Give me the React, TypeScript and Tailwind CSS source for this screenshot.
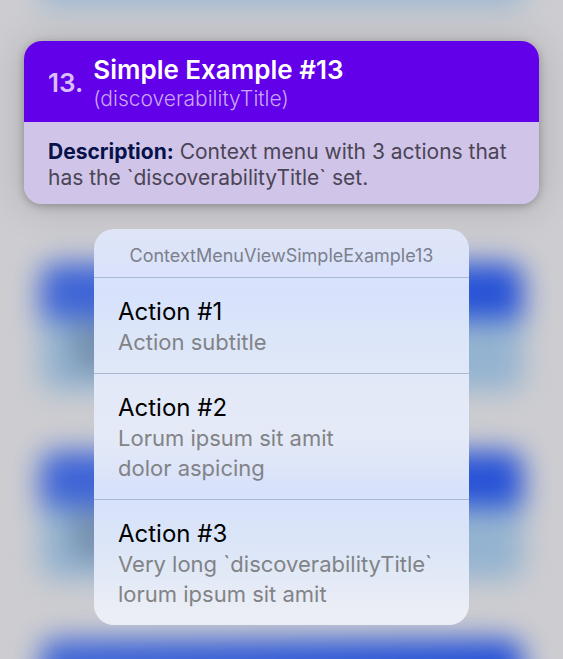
const actions = [
  { title: 'Action #1', lines: ['Action subtitle'] },
  { title: 'Action #2', lines: ['Lorum ipsum sit amit', 'dolor aspicing'] },
  { title: 'Action #3', lines: ['Very long `discoverabilityTitle`', 'lorum ipsum sit amit'] },
];

function BackdropCard() {
  return (
    <div className="shrink-0 overflow-hidden rounded-2xl">
      <div className="h-[56px] bg-linear-to-r from-[#4066d6] to-[#2450d6]" />
      <div className="h-[72px] bg-[#94b3d0] pt-1 pl-8">
        <div className="h-12 w-4/5 bg-[#7590ae]" />
      </div>
    </div>
  );
}

function Backdrop() {
  return (
    <div aria-hidden="true" className="absolute inset-0 overflow-hidden bg-[#cdcdd1]">
      <div className="-mt-10 px-10 blur-[14px]">
        <div className="h-11 bg-[#94b3d0]" />
        <div className="flex flex-col gap-[60px] pt-[259px]">
          <BackdropCard />
          <BackdropCard />
          <BackdropCard />
        </div>
      </div>
    </div>
  );
}

function ExampleCard() {
  return (
    <article className="overflow-hidden rounded-[18px] shadow-[0_2px_40px_rgba(0,0,0,0.16),0_2px_8px_rgba(0,0,0,0.25)]">
      <header className="flex items-center gap-2.5 bg-[#6200ea] px-6 pt-[13px] pb-2.5">
        <span className="text-[26px] leading-8 font-semibold text-[#d9bffa]">13.</span>
        <div>
          <h1 className="text-[26px] leading-8 font-semibold text-white">Simple Example #13</h1>
          <p className="text-[21px] leading-[26px] font-light text-[#c8a6f8]">(discoverabilityTitle)</p>
        </div>
      </header>
      <p className="bg-[#d1c4e9] px-6 pt-[17px] pb-[13px] text-[21px] leading-[26px] font-normal text-[#4a4555]">
        <strong className="font-bold text-[#06134a]">Description:</strong> Context menu with 3 actions that
        has the `discoverabilityTitle` set.
      </p>
    </article>
  );
}

function ContextMenu() {
  return (
    <section
      aria-labelledby="menu-title"
      className="mx-auto w-full max-w-[375px] overflow-hidden rounded-[20px] bg-linear-to-b from-[#dfe5f7] via-[#e3e9f7] via-42% to-[#ebeef5]"
    >
      <div className="bg-[linear-gradient(to_bottom,transparent_0%,#d7e1fc_16%,#dbe6f9_27%,transparent_40%,transparent_52%,#d7e1fb_66%,#dae5f8_78%,transparent_96%)]">
        <h2 id="menu-title" className="px-4 pt-3.5 pb-2 text-center text-[18px] leading-[26px] font-normal text-[#7b7f8d]">
          ContextMenuViewSimpleExample13
        </h2>
        {actions.map((action) => (
          <button
            key={action.title}
            type="button"
            className="block w-full border-t border-[#a9b8d3] px-6 pt-[18px] pb-4 text-left"
          >
            <span className="block text-[24px] leading-[31px] text-black">{action.title}</span>
            {action.lines.map((line) => (
              <span key={line} className="block text-[22px] leading-[30px] whitespace-nowrap text-[#828386]">
                {line}
              </span>
            ))}
          </button>
        ))}
      </div>
    </section>
  );
}

export default function App() {
  return (
    <main className="relative min-h-screen font-['Inter','Liberation_Sans',sans-serif]">
      <Backdrop />
      <div className="relative flex flex-col gap-[25px] px-6 pt-[41px] pb-8">
        <ExampleCard />
        <ContextMenu />
      </div>
    </main>
  );
}
